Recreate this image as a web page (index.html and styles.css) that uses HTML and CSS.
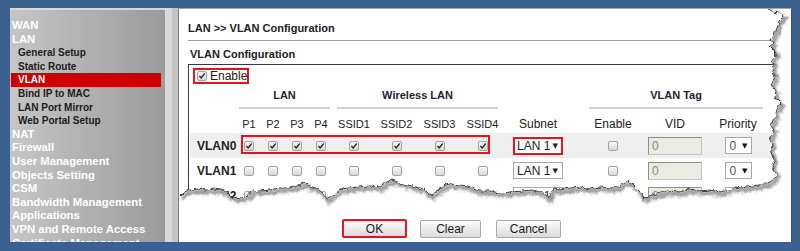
FILE: index.html
```html
<!DOCTYPE html>
<html>
<head>
<meta charset="utf-8">
<title>LAN VLAN Configuration</title>
<link rel="stylesheet" href="styles.css">
</head>
<body>
<div class="frame">
  <nav class="sidebar">
    <div class="top">WAN</div>
    <div class="top">LAN</div>
    <div class="sub">General Setup</div>
    <div class="sub">Static Route</div>
    <div class="sub active">VLAN</div>
    <div class="sub">Bind IP to MAC</div>
    <div class="sub">LAN Port Mirror</div>
    <div class="sub">Web Portal Setup</div>
    <div class="top">NAT</div>
    <div class="top">Firewall</div>
    <div class="top">User Management</div>
    <div class="top">Objects Setting</div>
    <div class="top">CSM</div>
    <div class="top">Bandwidth Management</div>
    <div class="top">Applications</div>
    <div class="top">VPN and Remote Access</div>
    <div class="top">Certificate Management</div>
  </nav>
  <div class="strip"></div>
  <main class="panel">
    <div class="title">LAN &gt;&gt; VLAN Configuration</div>
    <div class="subtitle">VLAN Configuration</div>
    <div class="tbox">
      <div class="enable-row">
        <span class="enable"><span class="cb"><svg viewBox="0 0 8 8"><path d="M1.4 4.1 L3.2 6 L6.7 1.5"/></svg></span>Enable</span>
      </div>
      <div class="groups">
        <div></div>
        <div class="grp g-lan">LAN</div>
        <div class="grp g-wl">Wireless LAN</div>
        <div></div>
        <div class="grp g-tag">VLAN Tag</div>
      </div>
      <div class="grid heads">
        <div></div>
        <div class="sm">P1</div><div class="sm">P2</div><div class="sm">P3</div><div class="sm">P4</div>
        <div class="sm">SSID1</div><div class="sm">SSID2</div><div class="sm">SSID3</div><div class="sm">SSID4</div>
        <div>Subnet</div><div></div><div>Enable</div><div>VID</div><div>Priority</div>
      </div>
      <div class="grid row alt">
        <div class="lbl">VLAN0</div>
        <span class="cb"><svg viewBox="0 0 8 8"><path d="M1.4 4.1 L3.2 6 L6.7 1.5"/></svg></span>
        <span class="cb"><svg viewBox="0 0 8 8"><path d="M1.4 4.1 L3.2 6 L6.7 1.5"/></svg></span>
        <span class="cb"><svg viewBox="0 0 8 8"><path d="M1.4 4.1 L3.2 6 L6.7 1.5"/></svg></span>
        <span class="cb"><svg viewBox="0 0 8 8"><path d="M1.4 4.1 L3.2 6 L6.7 1.5"/></svg></span>
        <span class="cb"><svg viewBox="0 0 8 8"><path d="M1.4 4.1 L3.2 6 L6.7 1.5"/></svg></span>
        <span class="cb"><svg viewBox="0 0 8 8"><path d="M1.4 4.1 L3.2 6 L6.7 1.5"/></svg></span>
        <span class="cb"><svg viewBox="0 0 8 8"><path d="M1.4 4.1 L3.2 6 L6.7 1.5"/></svg></span>
        <span class="cb"><svg viewBox="0 0 8 8"><path d="M1.4 4.1 L3.2 6 L6.7 1.5"/></svg></span>
        <span class="sel hot"><span>LAN 1</span><span class="arr">▼</span></span>
        <div></div>
        <span class="cb"></span>
        <span class="vid">0</span>
        <span class="sel pri"><span>0</span><span class="arr">▼</span></span>
        <span class="mark"></span>
      </div>
      <div class="grid row">
        <div class="lbl">VLAN1</div>
        <span class="cb"></span><span class="cb"></span><span class="cb"></span><span class="cb"></span>
        <span class="cb"></span><span class="cb"></span><span class="cb"></span><span class="cb"></span>
        <span class="sel"><span>LAN 1</span><span class="arr">▼</span></span>
        <div></div>
        <span class="cb"></span>
        <span class="vid">0</span>
        <span class="sel pri"><span>0</span><span class="arr">▼</span></span>
      </div>
      <div class="grid row">
        <div class="lbl">VLAN2</div>
        <span class="cb"></span><span class="cb"></span><span class="cb"></span><span class="cb"></span>
        <span class="cb"></span><span class="cb"></span><span class="cb"></span><span class="cb"></span>
        <span class="sel"><span>LAN 1</span><span class="arr">▼</span></span>
        <div></div>
        <span class="cb"></span>
        <span class="vid">0</span>
        <span class="sel pri"><span>0</span><span class="arr">▼</span></span>
      </div>
    </div>
    <div class="buttons">
      <button class="btn ok">OK</button>
      <button class="btn clear">Clear</button>
      <button class="btn cancel">Cancel</button>
    </div>
    <svg class="torn" viewBox="178 8 614 234" width="614" height="234">
      <defs>
        <filter id="rough" x="-5%" y="-5%" width="110%" height="110%">
          <feTurbulence type="fractalNoise" baseFrequency="0.22" numOctaves="2" seed="4" result="n"/>
          <feDisplacementMap in="SourceGraphic" in2="n" scale="5" xChannelSelector="R" yChannelSelector="G"/>
        </filter>
        <filter id="soft" x="-10%" y="-10%" width="120%" height="120%">
          <feGaussianBlur stdDeviation="1.6"/>
        </filter>
        <clipPath id="outside">
          <polygon points="766,8 772,11 778,13 784,16 782,18 779,21 778,25 777,29 775,33 773,37 771,40 773,43 770,47 773,50 776,53 775,57 772,61 774,66 772,70 775,75 774,80 771,84 773,88 776,92 775,97 778,101 781,104 778,108 775,112 776,117 773,121 771,126 774,130 772,135 770,140 773,145 770,150 772,155 775,160 772,165 774,170 777,175 774,179 770,182 765,184 760,185 752,186 742,188 735,187 728,190 720,192 710,190 700,191 690,189 680,192 668,191 660,193 652,195 645,198 641,193 636,188 632,184 628,181 624,183 618,187 610,188 600,187 590,189 580,187 570,188 560,190 553,189 549,198 546,194 540,192 532,190 522,191 512,192 500,193 490,191 480,191 474,189 468,186 460,185 450,184 444,186 438,190 432,195 428,193 424,189 416,187 408,185 400,183 392,180 386,183 380,187 370,186 358,187 348,188 340,190 332,196 327,199 322,192 318,189 310,186 304,183 298,186 290,188 280,188 270,190 260,191 252,191 248,196 242,198 232,197 228,193 222,190 214,189 206,190 198,189 190,190 184,192 180,196 180,214 800,214 800,0 766,0"/>
        </clipPath>
      </defs>
      <g filter="url(#rough)">
        <polygon fill="#fff" points="766,8 772,11 778,13 784,16 782,18 779,21 778,25 777,29 775,33 773,37 771,40 773,43 770,47 773,50 776,53 775,57 772,61 774,66 772,70 775,75 774,80 771,84 773,88 776,92 775,97 778,101 781,104 778,108 775,112 776,117 773,121 771,126 774,130 772,135 770,140 773,145 770,150 772,155 775,160 772,165 774,170 777,175 774,179 770,182 765,184 760,185 752,186 742,188 735,187 728,190 720,192 710,190 700,191 690,189 680,192 668,191 660,193 652,195 645,198 641,193 636,188 632,184 628,181 624,183 618,187 610,188 600,187 590,189 580,187 570,188 560,190 553,189 549,198 546,194 540,192 532,190 522,191 512,192 500,193 490,191 480,191 474,189 468,186 460,185 450,184 444,186 438,190 432,195 428,193 424,189 416,187 408,185 400,183 392,180 386,183 380,187 370,186 358,187 348,188 340,190 332,196 327,199 322,192 318,189 310,186 304,183 298,186 290,188 280,188 270,190 260,191 252,191 248,196 242,198 232,197 228,193 222,190 214,189 206,190 198,189 190,190 184,192 180,196 180,214 800,214 800,0 766,0"/>
        <g clip-path="url(#outside)">
          <polyline fill="none" stroke="#6a6a6a" stroke-width="4" opacity="0.75" filter="url(#soft)" transform="translate(1.5,2.5)" points="766,8 772,11 778,13 784,16 782,18 779,21 778,25 777,29 775,33 773,37 771,40 773,43 770,47 773,50 776,53 775,57 772,61 774,66 772,70 775,75 774,80 771,84 773,88 776,92 775,97 778,101 781,104 778,108 775,112 776,117 773,121 771,126 774,130 772,135 770,140 773,145 770,150 772,155 775,160 772,165 774,170 777,175 774,179 770,182 765,184 760,185 752,186 742,188 735,187 728,190 720,192 710,190 700,191 690,189 680,192 668,191 660,193 652,195 645,198 641,193 636,188 632,184 628,181 624,183 618,187 610,188 600,187 590,189 580,187 570,188 560,190 553,189 549,198 546,194 540,192 532,190 522,191 512,192 500,193 490,191 480,191 474,189 468,186 460,185 450,184 444,186 438,190 432,195 428,193 424,189 416,187 408,185 400,183 392,180 386,183 380,187 370,186 358,187 348,188 340,190 332,196 327,199 322,192 318,189 310,186 304,183 298,186 290,188 280,188 270,190 260,191 252,191 248,196 242,198 232,197 228,193 222,190 214,189 206,190 198,189 190,190 184,192 180,196"/>
        </g>
        <polyline fill="none" stroke="#3a3a3a" stroke-width="1" points="766,8 772,11 778,13 784,16 782,18 779,21 778,25 777,29 775,33 773,37 771,40 773,43 770,47 773,50 776,53 775,57 772,61 774,66 772,70 775,75 774,80 771,84 773,88 776,92 775,97 778,101 781,104 778,108 775,112 776,117 773,121 771,126 774,130 772,135 770,140 773,145 770,150 772,155 775,160 772,165 774,170 777,175 774,179 770,182 765,184 760,185 752,186 742,188 735,187 728,190 720,192 710,190 700,191 690,189 680,192 668,191 660,193 652,195 645,198 641,193 636,188 632,184 628,181 624,183 618,187 610,188 600,187 590,189 580,187 570,188 560,190 553,189 549,198 546,194 540,192 532,190 522,191 512,192 500,193 490,191 480,191 474,189 468,186 460,185 450,184 444,186 438,190 432,195 428,193 424,189 416,187 408,185 400,183 392,180 386,183 380,187 370,186 358,187 348,188 340,190 332,196 327,199 322,192 318,189 310,186 304,183 298,186 290,188 280,188 270,190 260,191 252,191 248,196 242,198 232,197 228,193 222,190 214,189 206,190 198,189 190,190 184,192 180,196"/>
      </g>
      <line x1="791.5" y1="8" x2="791.5" y2="242" stroke="#4d4d4d" stroke-width="1"/>
      <line x1="178.5" y1="190" x2="178.5" y2="242" stroke="#7d7d7d" stroke-width="1"/>
    </svg>
  </main>
</div>
</body>
</html>
```

FILE: styles.css
```css
* { box-sizing: border-box; margin: 0; padding: 0; }
html, body { height: 100%; }
body {
  background: #3a6190;
  font-family: "Liberation Sans", Arial, sans-serif;
  overflow: hidden;
}
.frame {
  display: flex;
  height: 251px;
  padding: 8px 8px 9px 10px;
}

/* sidebar */
.sidebar {
  width: 155px;
  flex: none;
  background: linear-gradient(to right, #c6c6c6, #9b9b9b);
  border-top: 2px solid #d8d8d8;
  padding-top: 9px;
  overflow: hidden;
}
.sidebar div {
  height: 13.6px;
  line-height: 13.6px;
  white-space: nowrap;
  font-weight: bold;
}
.top { color: #fff; font-size: 11.3px; padding-left: 2px; }
.sub { color: #1c1c1c; font-size: 10px; padding-left: 8px; }
.sub.active {
  background: #cc0000;
  color: #fff;
  margin-left: 1px;
  width: 150px;
  padding-left: 7px;
}
.strip {
  width: 13px;
  flex: none;
  background: linear-gradient(to right, #dadada 0, #dadada 7px, #c5c5c5 7px);
}

/* panel */
.panel {
  position: relative;
  width: 614px;
  flex: none;
  background: #fff;
  border-top: 1px solid #a5a5a5;
  border-left: 1px solid #7d7d7d;
  border-right: 1px solid #4d4d4d;
  padding-left: 9px;
  color: #222;
  font-size: 12px;
  overflow: hidden;
}
.title {
  margin-top: 12px;
  font-weight: bold;
  font-size: 11px;
  line-height: 14px;
  padding-bottom: 5px;
  border-bottom: 1px solid #a0a0a0;
}
.subtitle {
  margin-top: 6px;
  margin-bottom: 3px;
  padding-left: 2px;
  font-weight: bold;
  font-size: 11px;
  line-height: 14px;
}
.tbox {
  border-top: 1px solid #3a3a3a;
  border-left: 1px solid #3a3a3a;
  padding-left: 1px;
}
.enable-row {
  height: 19px;
  padding-top: 3px;
}
.enable {
  display: inline-flex;
  align-items: center;
  gap: 3px;
  height: 16px;
  margin-left: 3px;
  padding-left: 2px;
  border: 2px solid #e8141b;
  font-size: 12px;
  line-height: 12px;
}

.groups {
  display: grid;
  grid-template-columns: 47px 96px 171px 74px 196px;
  height: 25px;
}
.grp {
  font-weight: bold;
  font-size: 11px;
  line-height: 14px;
  padding-top: 4px;
  text-align: center;
  border-bottom: 2px solid #d2d2d2;
  color: #1f2433;
}
.g-lan { margin: 0 3px 0 2px; }
.g-wl { margin: 0 6px 0 4px; }
.g-tag { margin: 0 11px; }

.grid {
  display: grid;
  grid-template-columns: 47px 24px 24px 24px 24px 42px 43px 43px 43px 68px 6px 70px 54px 72px;
}
.heads {
  height: 24px;
  padding-top: 8px;
  line-height: 14px;
  text-align: center;
  font-size: 12px;
  white-space: nowrap;
}
.heads .sm { font-size: 11px; }
.row {
  position: relative;
  height: 25px;
  align-items: center;
  justify-items: center;
}
.row.alt { background: #efefef; }
.lbl {
  justify-self: start;
  padding-left: 7px;
  font-weight: bold;
  font-size: 12px;
}
.cb {
  display: block;
  width: 10px;
  height: 10px;
  border: 1px solid #a3a3a3;
  border-radius: 2px;
  background: linear-gradient(#f7f7f7, #d8d8d8);
  position: relative;
}
.cb svg {
  display: block;
  width: 8px;
  height: 8px;
}
.cb path {
  fill: none;
  stroke: #2b2b2b;
  stroke-width: 1.4;
}
.sel {
  display: flex;
  align-items: center;
  justify-content: space-between;
  width: 50px;
  height: 17px;
  padding: 0 4px 0 3px;
  border: 1px solid #a9a9a9;
  background: #fff;
  font-size: 12px;
  color: #222;
}
.sel.hot {
  border: 2px solid #e8141b;
  height: 18px;
  padding: 0 3px 0 2px;
}
.arr { font-size: 7px; font-family: "DejaVu Sans", sans-serif; }
.sel.pri {
  width: 27px;
  padding: 0 3px 0 4px;
  color: #555;
}
.sel.pri .arr { color: #111; }
.vid {
  display: block;
  width: 54px;
  height: 18px;
  line-height: 16px;
  padding-left: 3px;
  background: #ebebe4;
  border: 1px solid #c4c4c4;
  border-top-color: #8f8f8f;
  border-left-color: #8f8f8f;
  color: #8a8a8a;
  font-size: 12px;
}
.mark {
  position: absolute;
  left: 51px;
  top: 2px;
  width: 249px;
  height: 19px;
  border: 2px solid #e8141b;
}

.buttons {
  display: flex;
  align-items: center;
  margin-top: 11px;
  padding-left: 154px;
}
.btn {
  display: flex;
  align-items: center;
  justify-content: center;
  height: 18px;
  border: 1px solid #a8a8a8;
  border-radius: 2px;
  background: linear-gradient(#fbfbfb, #dcdcdc);
  font-family: "Liberation Sans", Arial, sans-serif;
  font-size: 12px;
  color: #1a1a1a;
}
.btn.ok { width: 65px; height: 19px; border: 2px solid #e8141b; }
.btn.clear { width: 61px; margin-left: 13px; }
.btn.cancel { width: 65px; margin-left: 15px; }

.torn {
  position: absolute;
  top: -1px;
  left: -1px;
  pointer-events: none;
}
```
